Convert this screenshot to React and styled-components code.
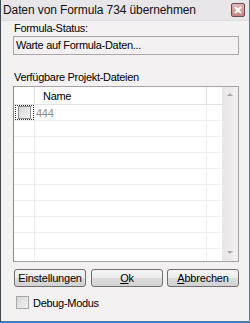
import React from "react"
import styled, { createGlobalStyle } from "styled-components"

const GlobalStyle = createGlobalStyle`
  html, body {
    margin: 0;
    padding: 0;
    background: #f4f1f3;
  }
  body {
    font-family: "Liberation Sans", Arial, sans-serif;
    font-size: 11px;
    color: #000;
  }
`

const Window = styled.div`
  width: 250px;
  height: 323px;
  box-sizing: border-box;
  border-left: 1px solid #3f4a56;
  border-right: 1px solid #6b7784;
  border-bottom: 2px solid #4a7cb5;
  background: #f4f1f3;
  display: flex;
  flex-direction: column;
  overflow: hidden;
`

const TitleBar = styled.div`
  height: 20px;
  flex: none;
  display: flex;
  align-items: center;
  justify-content: space-between;
  padding: 0 3px 0 2px;
  background: #e9e6e9;
  border-bottom: 1px solid #e0dde0;
`

const Title = styled.span`
  font-size: 12px;
  letter-spacing: -0.1px;
  color: #111;
`

const CloseButton = styled.div`
  width: 12px;
  height: 12px;
  margin-right: 1px;
  border: 1px solid #6e4b4f;
  border-radius: 2px;
  background: linear-gradient(#e3b3b3, #c88585);
  display: flex;
  align-items: center;
  justify-content: center;
`

const Content = styled.div`
  flex: 1;
  display: flex;
  flex-direction: column;
  padding: 0 10px 0 12px;
`

const Label = styled.div`
  height: 14px;
  line-height: 14px;
  padding-left: 1px;
  letter-spacing: -0.3px;
  margin-top: ${(p) => p.$top || 0}px;
`

const StatusBox = styled.div`
  height: 17px;
  line-height: 17px;
  margin-top: 1px;
  border: 1px solid #a9a7ab;
  padding-left: 2px;
  letter-spacing: -0.3px;
`

const ListView = styled.div`
  margin-top: 2px;
  height: 176px;
  flex: none;
  box-sizing: border-box;
  border: 1px solid #a3a3a8;
  border-left-color: #8a8a90;
  background: #fff;
  display: flex;
  overflow: hidden;
`

const Grid = styled.div`
  flex: 1;
  display: flex;
  flex-direction: column;
  overflow: hidden;
`

const Row = styled.div`
  display: grid;
  grid-template-columns: 21px 172px 1fr;
  height: ${(p) => (p.$header ? 18 : 16)}px;
  flex: none;
  box-sizing: border-box;
  border-bottom: 1px solid ${(p) => (p.$header ? "#e4e1e4" : "#f1eef0")};
`

const Cell = styled.div`
  border-right: 1px solid ${(p) => (p.$header ? "#e4e1e4" : "#f1eef0")};
  display: flex;
  align-items: center;
  padding-left: ${(p) => p.$pad || 0}px;
  letter-spacing: -0.3px;
  color: ${(p) => (p.$muted ? "#8c8c8c" : "#000")};
  &:last-child {
    border-right: none;
  }
`

const FocusBox = styled.div`
  margin-left: 1px;
  width: 19px;
  height: 15px;
  box-sizing: border-box;
  outline: 1px dotted #333;
  outline-offset: -1px;
  display: flex;
  align-items: center;
  justify-content: center;
`

const Check = styled.div`
  width: 13px;
  height: 13px;
  flex: none;
  box-sizing: border-box;
  border: 1px solid ${(p) => (p.$dim ? "#a8a8a8" : "#8e8f8f")};
  background: linear-gradient(135deg, #d6d6d6, #f4f4f4);
`

const Scrollbar = styled.div`
  width: 16px;
  flex: none;
  background: linear-gradient(90deg, #e8e6e8 0%, #eeebed 50%, #f4f1f3 100%);
  display: flex;
  flex-direction: column;
  justify-content: space-between;
  align-items: center;
  padding: 6px 0 7px;
  box-sizing: border-box;
`

const Arrow = styled.div`
  width: 0;
  height: 0;
  border-left: 3px solid transparent;
  border-right: 3px solid transparent;
  ${(p) =>
    p.$down
      ? "border-top: 3px solid #a9a9ac;"
      : "border-bottom: 3px solid #a9a9ac;"}
`

const ButtonRow = styled.div`
  margin-top: 7px;
  padding-left: 1px;
  display: flex;
  gap: 5px;
`

const Button = styled.button`
  width: 72px;
  height: 18px;
  padding: 0;
  margin-left: ${(p) => p.$shift || 0}px;
  border: 1px solid #707070;
  border-radius: 3px;
  background: linear-gradient(#f6f6f6 0%, #ebebeb 50%, #dcdcdc 51%, #d2d2d2 100%);
  font-family: "Liberation Sans", Arial, sans-serif;
  font-size: 11px;
  letter-spacing: -0.2px;
  color: #000;
  u {
    text-decoration: underline;
  }
`

const DebugRow = styled.label`
  margin-top: 9px;
  display: flex;
  align-items: center;
  gap: 4px;
  padding-left: 3px;
  letter-spacing: -0.3px;
`

const rows = Array.from({ length: 10 })

export default function App() {
  return (
    <>
      <GlobalStyle />
      <Window>
        <TitleBar>
          <Title>Daten von Formula 734 übernehmen</Title>
          <CloseButton>
            <svg width="8" height="8" viewBox="0 0 8 8">
              <path d="M1 1 L7 7 M7 1 L1 7" stroke="#fff" strokeWidth="2" />
            </svg>
          </CloseButton>
        </TitleBar>
        <Content>
          <Label>Formula-Status:</Label>
          <StatusBox>Warte auf Formula-Daten...</StatusBox>
          <Label $top={15}>Verfügbare Projekt-Dateien</Label>
          <ListView>
            <Grid>
              <Row $header>
                <Cell $header />
                <Cell $header $pad={8}>Name</Cell>
                <Cell $header />
              </Row>
              <Row>
                <Cell>
                  <FocusBox>
                    <Check />
                  </FocusBox>
                </Cell>
                <Cell $muted $pad={1}>444</Cell>
                <Cell />
              </Row>
              {rows.map((_, i) => (
                <Row key={i}>
                  <Cell />
                  <Cell />
                  <Cell />
                </Row>
              ))}
            </Grid>
            <Scrollbar>
              <Arrow />
              <Arrow $down />
            </Scrollbar>
          </ListView>
          <ButtonRow>
            <Button>Einstellungen</Button>
            <Button>
              <u>O</u>k
            </Button>
            <Button $shift={-1}>
              <u>A</u>bbrechen
            </Button>
          </ButtonRow>
          <DebugRow>
            <Check $dim />
            Debug-Modus
          </DebugRow>
        </Content>
      </Window>
    </>
  )
}
